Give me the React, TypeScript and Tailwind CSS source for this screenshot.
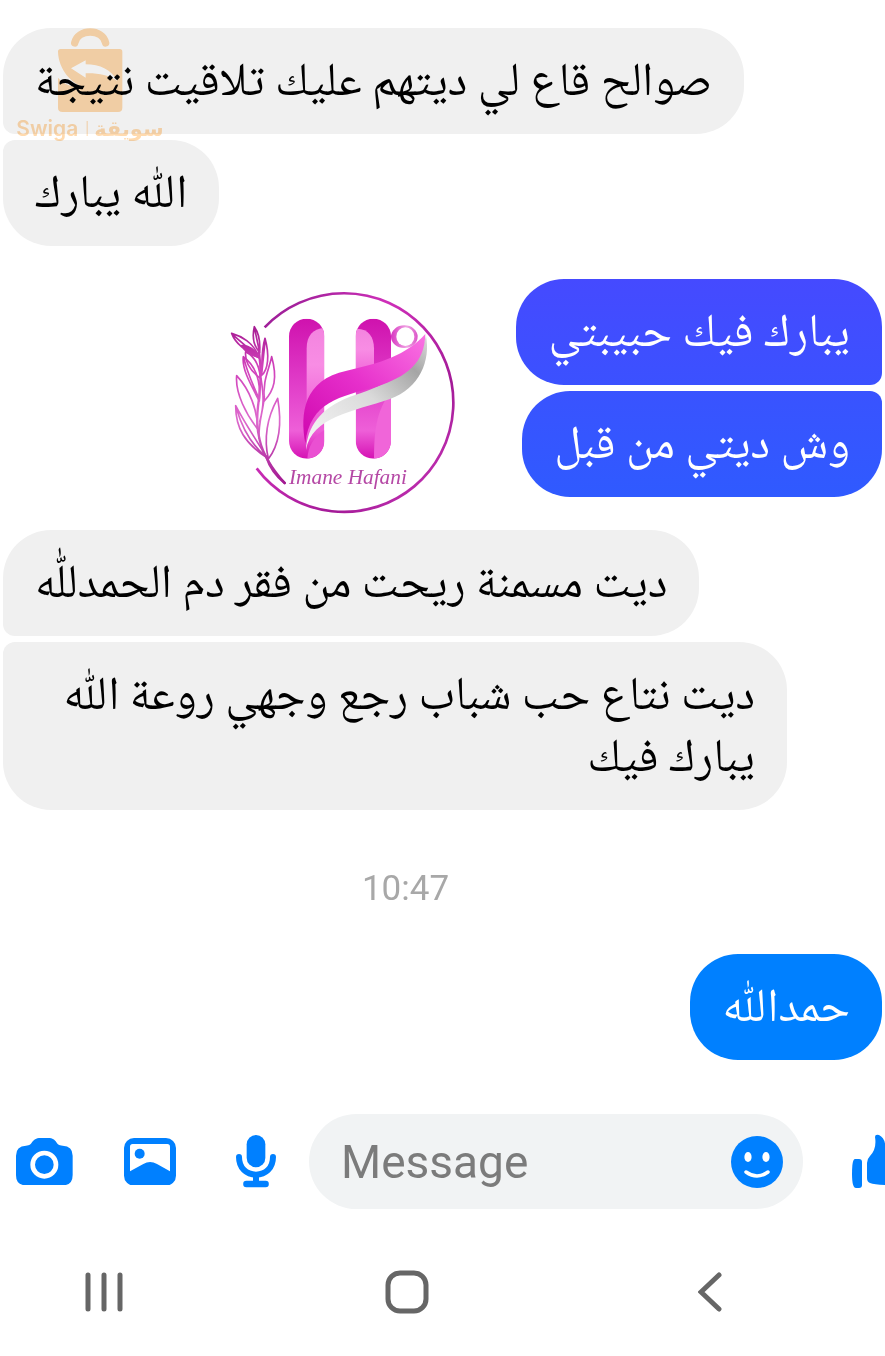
import clsx from "clsx";

type BubbleProps = {
  text: string;
  className: string;
};

function Bubble({ text, className }: BubbleProps) {
  return (
    <p
      dir="rtl"
      className={clsx(
        "w-fit rounded-[48px] px-8 pb-[18px] pt-[26px] text-[47px] leading-[62px]",
        className
      )}
    >
      {text}
    </p>
  );
}

function SwigaMark() {
  return (
    <svg
      viewBox="0 0 540 400"
      className="pointer-events-none absolute left-0 top-[15px] w-[180px] mix-blend-multiply"
      aria-hidden="true"
    >
      <g fill="#ffdaae">
        <path
          d="M224 84 C232 40 309 40 317 84"
          fill="none"
          stroke="#ffdaae"
          strokeWidth="22"
          strokeLinecap="round"
        />
        <path
          fillRule="evenodd"
          d="M182 102 H359 Q367 102 367 110 V278 Q367 291 354 291 H188 Q174 291 174 278 V188 C190 208 215 216 250 216 C215 205 176 165 174 110 Q174 102 182 102 Z M213 160 L257 136 V148 C300 148 335 165 352 198 C325 180 295 174 257 175 V188 Z"
        />
        <path d="M260 318 h3 v45 h-3 z" />
        <text
          x="49"
          y="363"
          fontFamily="Inter, sans-serif"
          fontWeight="600"
          fontSize="63"
        >
          Swiga
        </text>
        <text
          x="491"
          y="363"
          direction="rtl"
          fontFamily="'DejaVu Sans', sans-serif"
          fontWeight="700"
          fontSize="63"
        >
          سويقة
        </text>
      </g>
    </svg>
  );
}

function ShopLogo() {
  return (
    <svg
      viewBox="0 0 735 735"
      className="absolute left-[217px] top-px w-[245px]"
      role="img"
      aria-label="Imane Hafani"
    >
      <defs>
        <linearGradient id="ring" x1="0" y1="0" x2="1" y2="1">
          <stop offset="0" stopColor="#8e1a8e" />
          <stop offset=".35" stopColor="#cf2fb9" />
          <stop offset=".7" stopColor="#a31a97" />
          <stop offset="1" stopColor="#d13cc0" />
        </linearGradient>
        <linearGradient id="dark" x1="0" y1="0" x2="0" y2="1">
          <stop offset="0" stopColor="#cf12ae" />
          <stop offset=".45" stopColor="#e03cc8" />
          <stop offset=".8" stopColor="#ee5fd8" />
          <stop offset="1" stopColor="#d512b4" />
        </linearGradient>
        <linearGradient id="light" x1="0" y1="0" x2="0" y2="1">
          <stop offset="0" stopColor="#f384df" />
          <stop offset=".4" stopColor="#f88de4" />
          <stop offset="1" stopColor="#ee5cd6" />
        </linearGradient>
        <linearGradient id="ribbon" x1="0" y1="1" x2="1" y2="0">
          <stop offset="0" stopColor="#cf07ae" />
          <stop offset=".5" stopColor="#e62fcb" />
          <stop offset="1" stopColor="#fa73e3" />
        </linearGradient>
        <linearGradient id="silver" x1="0" y1="1" x2="1" y2="0">
          <stop offset="0" stopColor="#f7f7f7" />
          <stop offset=".5" stopColor="#dadada" />
          <stop offset=".8" stopColor="#a5a5a5" />
          <stop offset="1" stopColor="#dddddd" />
        </linearGradient>
        <linearGradient id="bead" x1="0" y1="0" x2="1" y2="0">
          <stop offset="0" stopColor="#d838c2" />
          <stop offset=".6" stopColor="#f0a5e3" />
          <stop offset="1" stopColor="#dc55c9" />
        </linearGradient>
        <linearGradient
          id="leaf"
          gradientUnits="userSpaceOnUse"
          x1="0"
          y1="30"
          x2="0"
          y2="510"
        >
          <stop offset="0" stopColor="#a3198f" />
          <stop offset=".25" stopColor="#d03fba" />
          <stop offset=".6" stopColor="#dd6acd" />
          <stop offset="1" stopColor="#a0168f" />
        </linearGradient>
        <clipPath id="stemLeft">
          <rect x="207" y="116" width="106" height="420" rx="53" />
        </clipPath>
        <clipPath id="stemRight">
          <rect x="407" y="116" width="106" height="420" rx="53" />
        </clipPath>
      </defs>

      <path
        d="M134 142 A328 328 0 1 1 110 565"
        fill="none"
        stroke="url(#ring)"
        strokeWidth="8"
      />

      <g clipPath="url(#stemLeft)">
        <path d="M207 116 H313 V536 H207 Z" fill="url(#dark)" />
        <path d="M313 144 C278 146 260 168 260 205 V420 H313 Z" fill="url(#light)" />
        <path d="M262 536 C264 500 282 470 313 450 V536 Z" fill="#ea50d2" />
      </g>
      <g clipPath="url(#stemRight)">
        <path d="M407 116 H513 V536 H407 Z" fill="url(#dark)" />
        <path d="M407 146 C444 144 462 170 462 205 V300 H407 Z" fill="url(#light)" />
        <path d="M513 330 C475 390 462 430 462 536 H513 Z" fill="#f065d9" />
      </g>

      <path
        d="M258 510 C262 440 300 385 390 350 C470 325 590 280 618 168 C632 240 600 325 510 357 C400 395 275 410 258 510 Z"
        fill="url(#silver)"
      />
      <path
        d="M256 490 C240 400 250 300 380 272 C480 250 560 225 616 162 C614 250 560 290 470 320 C360 350 270 365 256 490 Z"
        fill="url(#ribbon)"
      />
      <ellipse cx="553" cy="170" rx="40" ry="34" fill="url(#bead)" />
      <ellipse cx="556" cy="170" rx="27" ry="28" fill="#fff" />

      <g
        transform="translate(15 105)"
        fill="none"
        stroke="url(#leaf)"
        strokeWidth="5"
        strokeLinejoin="round"
        strokeLinecap="round"
      >
        <path
          d="M102 110 C110 170 106 210 102 250 C92 320 98 350 104 375 C112 410 135 455 179 504"
          strokeWidth="7"
        />
        <path d="M118 245 C114 290 100 320 102 370 M108 190 C116 240 118 270 104 320" />
        <path d="M124 425 C132 450 150 480 179 504" strokeWidth="8" />
        <path d="M20 55 C45 62 88 82 102 128 C75 112 35 95 20 55 Z M22 58 L98 124" />
        <path d="M50 92 C70 90 92 105 102 128 C80 120 60 112 50 92 Z" fill="url(#leaf)" />
        <path d="M88 35 C80 70 88 95 104 112 C106 85 102 55 88 35 Z M89 42 L103 108" />
        <path d="M120 70 C108 110 112 140 109 182 C130 165 134 120 120 70 Z M120 80 L110 178" />
        <path d="M55 125 C50 160 75 205 103 258 C108 200 95 155 55 125 Z M57 130 C65 170 85 210 102 252" />
        <path d="M62 110 C58 145 80 170 106 190 C104 155 90 125 62 110 Z" />
        <path d="M140 125 C132 165 112 195 118 258 C148 225 158 190 140 125 Z" />
        <path d="M35 182 C30 235 65 300 98 342 C97 285 75 225 35 182 Z" />
        <path d="M32 272 C32 340 60 385 125 428 C95 375 62 330 32 272 Z M34 280 C50 335 80 390 122 424" />
        <path d="M158 250 C125 310 116 370 130 432 C162 390 172 330 158 250 Z" />
      </g>

      <text
        x="207"
        y="612"
        fill="#b548a5"
        fontFamily="'Liberation Serif', serif"
        fontStyle="italic"
        fontSize="64"
      >
        Imane Hafani
      </text>
    </svg>
  );
}

function CameraIcon() {
  return (
    <svg viewBox="48 114 171 143" className="w-[57px]" aria-hidden="true">
      <path
        d="M78 137 C101 137 92 114 122 114 H144 C174 114 164 137 188 137 Q218 138 218 167 V225 Q218 256 188 256 H78 Q48 256 48 226 V167 Q48 138 78 137 Z"
        fill="#0080ff"
      />
      <circle cx="133" cy="194" r="35" fill="none" stroke="#fff" strokeWidth="14" />
    </svg>
  );
}

function GalleryIcon() {
  return (
    <svg viewBox="373 114 156 143" className="w-[52px]" aria-hidden="true">
      <rect x="373" y="114" width="156" height="143" rx="30" fill="#0080ff" />
      <path
        d="M399 132 H503 Q511 132 511 140 V214 L472 192 Q451 180 431 192 L391 214 V140 Q391 132 399 132 Z"
        fill="#fff"
      />
      <circle cx="420" cy="161" r="15" fill="#0080ff" />
    </svg>
  );
}

function MicIcon() {
  return (
    <svg viewBox="709 107 120 157" className="w-10" aria-hidden="true">
      <rect x="741" y="107" width="56" height="97" rx="28" fill="#0080ff" />
      <g fill="none" stroke="#0080ff" strokeLinecap="round">
        <path d="M718 173 C718 206 740 226 769 226 C798 226 820 206 820 173" strokeWidth="18" />
        <path d="M769 230 V252" strokeWidth="18" />
        <path d="M740 254 H798" strokeWidth="19" />
      </g>
    </svg>
  );
}

function SmileIcon() {
  return (
    <svg viewBox="0 0 52 52" className="w-[52px]" aria-hidden="true">
      <circle cx="26" cy="26" r="26" fill="#0080ff" />
      <ellipse cx="17" cy="21" rx="3.6" ry="5" fill="#fff" />
      <ellipse cx="35" cy="21" rx="3.6" ry="5" fill="#fff" />
      <path
        d="M15 36 Q26 44 37 36"
        fill="none"
        stroke="#fff"
        strokeWidth="3.5"
        strokeLinecap="round"
      />
    </svg>
  );
}

function LikeIcon() {
  return (
    <svg viewBox="0 0 56 56" className="w-14" aria-hidden="true">
      <g fill="#0080ff">
        <path d="M4 25 H8 Q11 25 11 28 V51 Q11 54 8 54 H5 Q1 54 1 40 Q1 25 4 25 Z" />
        <path d="M24 3 Q24 0 28 1 Q36 5 34 19 H48 Q55 20 53 27 L50 44 Q48 51 40 51 Q24 51 19 49 Q16 48 16 44 V29 Q16 25 19 22 Q26 15 24 3 Z" />
      </g>
    </svg>
  );
}

export default function App() {
  return (
    <main className="min-h-screen w-full overflow-hidden bg-white font-['Noto_Naskh_Arabic','Noto_Sans_Arabic','DejaVu_Sans',sans-serif] text-black">
      <div className="relative px-[3px] pt-7">
        <section className="flex flex-col items-start gap-1.5">
          <Bubble text="صوالح قاع لي ديتهم عليك تلاقيت نتيجة" className="rounded-bl-xl bg-[#f0f0f0]" />
          <Bubble text="اللّٰه يبارك" className="rounded-tl-xl bg-[#f0f0f0]" />
        </section>
        <SwigaMark />

        <section className="relative mt-[33px] flex flex-col items-end gap-1.5">
          <ShopLogo />
          <Bubble
            text="يبارك فيك حبيبتي"
            className="rounded-br-xl bg-linear-to-b from-[#454aff] to-[#3b51ff] text-white"
          />
          <Bubble
            text="وش ديتي من قبل"
            className="rounded-tr-xl bg-linear-to-b from-[#3953ff] to-[#2f5aff] text-white"
          />
        </section>

        <section className="mt-[33px] flex flex-col items-start gap-1.5">
          <Bubble text="ديت مسمنة ريحت من فقر دم الحمدللّٰه" className="rounded-bl-xl bg-[#f0f0f0]" />
          <Bubble
            text="ديت نتاع حب شباب رجع وجهي روعة اللّٰه يبارك فيك"
            className="max-w-[784px] rounded-tl-xl bg-[#f0f0f0]"
          />
        </section>

        <time className="mt-[58px] block pr-[74px] text-center font-['Roboto',sans-serif] text-[35px] leading-[42px] text-[#a8a8a8]">
          10:47
        </time>

        <section className="mt-11 flex flex-col items-end">
          <Bubble text="حمداللّٰه" className="bg-[#0080ff] text-white" />
        </section>
      </div>

      <form className="mt-[54px] flex items-center pl-4">
        <button type="button" aria-label="Camera" className="mr-[51px] shrink-0">
          <CameraIcon />
        </button>
        <button type="button" aria-label="Gallery" className="mr-[60px] shrink-0">
          <GalleryIcon />
        </button>
        <button type="button" aria-label="Voice message" className="mr-[33px] shrink-0">
          <MicIcon />
        </button>
        <div className="flex h-[95px] min-w-0 flex-1 items-center rounded-full bg-[#f1f3f4] pl-8 pr-5">
          <input
            type="text"
            aria-label="Message"
            placeholder="Message"
            className="min-w-0 flex-1 bg-transparent font-['Roboto',sans-serif] text-[46px] leading-[60px] outline-none placeholder:text-[#7b7b7b]"
          />
          <button type="button" aria-label="Emoji" className="shrink-0">
            <SmileIcon />
          </button>
        </div>
        <button type="button" aria-label="Like" className="-mr-[22px] ml-12 shrink-0">
          <LikeIcon />
        </button>
      </form>

      <nav className="mt-[59px] flex justify-between pl-20 pr-[151px]">
        <button type="button" aria-label="Recent apps" className="flex size-12 items-center justify-center">
          <svg viewBox="0 0 40 40" className="size-10" fill="none" stroke="#666" strokeWidth="5" strokeLinecap="round" aria-hidden="true">
            <path d="M4 3 V37 M20 3 V37 M36 3 V37" />
          </svg>
        </button>
        <button type="button" aria-label="Home" className="flex size-12 items-center justify-center">
          <svg viewBox="0 0 44 44" className="size-11" fill="none" stroke="#666" strokeWidth="5" aria-hidden="true">
            <rect x="3" y="3" width="38" height="38" rx="12" />
          </svg>
        </button>
        <button type="button" aria-label="Back" className="flex size-12 items-center justify-center">
          <svg viewBox="0 0 24 40" className="h-10 w-6" fill="none" stroke="#666" strokeWidth="5" strokeLinecap="round" aria-hidden="true">
            <path d="M21 3 L3 20 L21 37" />
          </svg>
        </button>
      </nav>
    </main>
  );
}
